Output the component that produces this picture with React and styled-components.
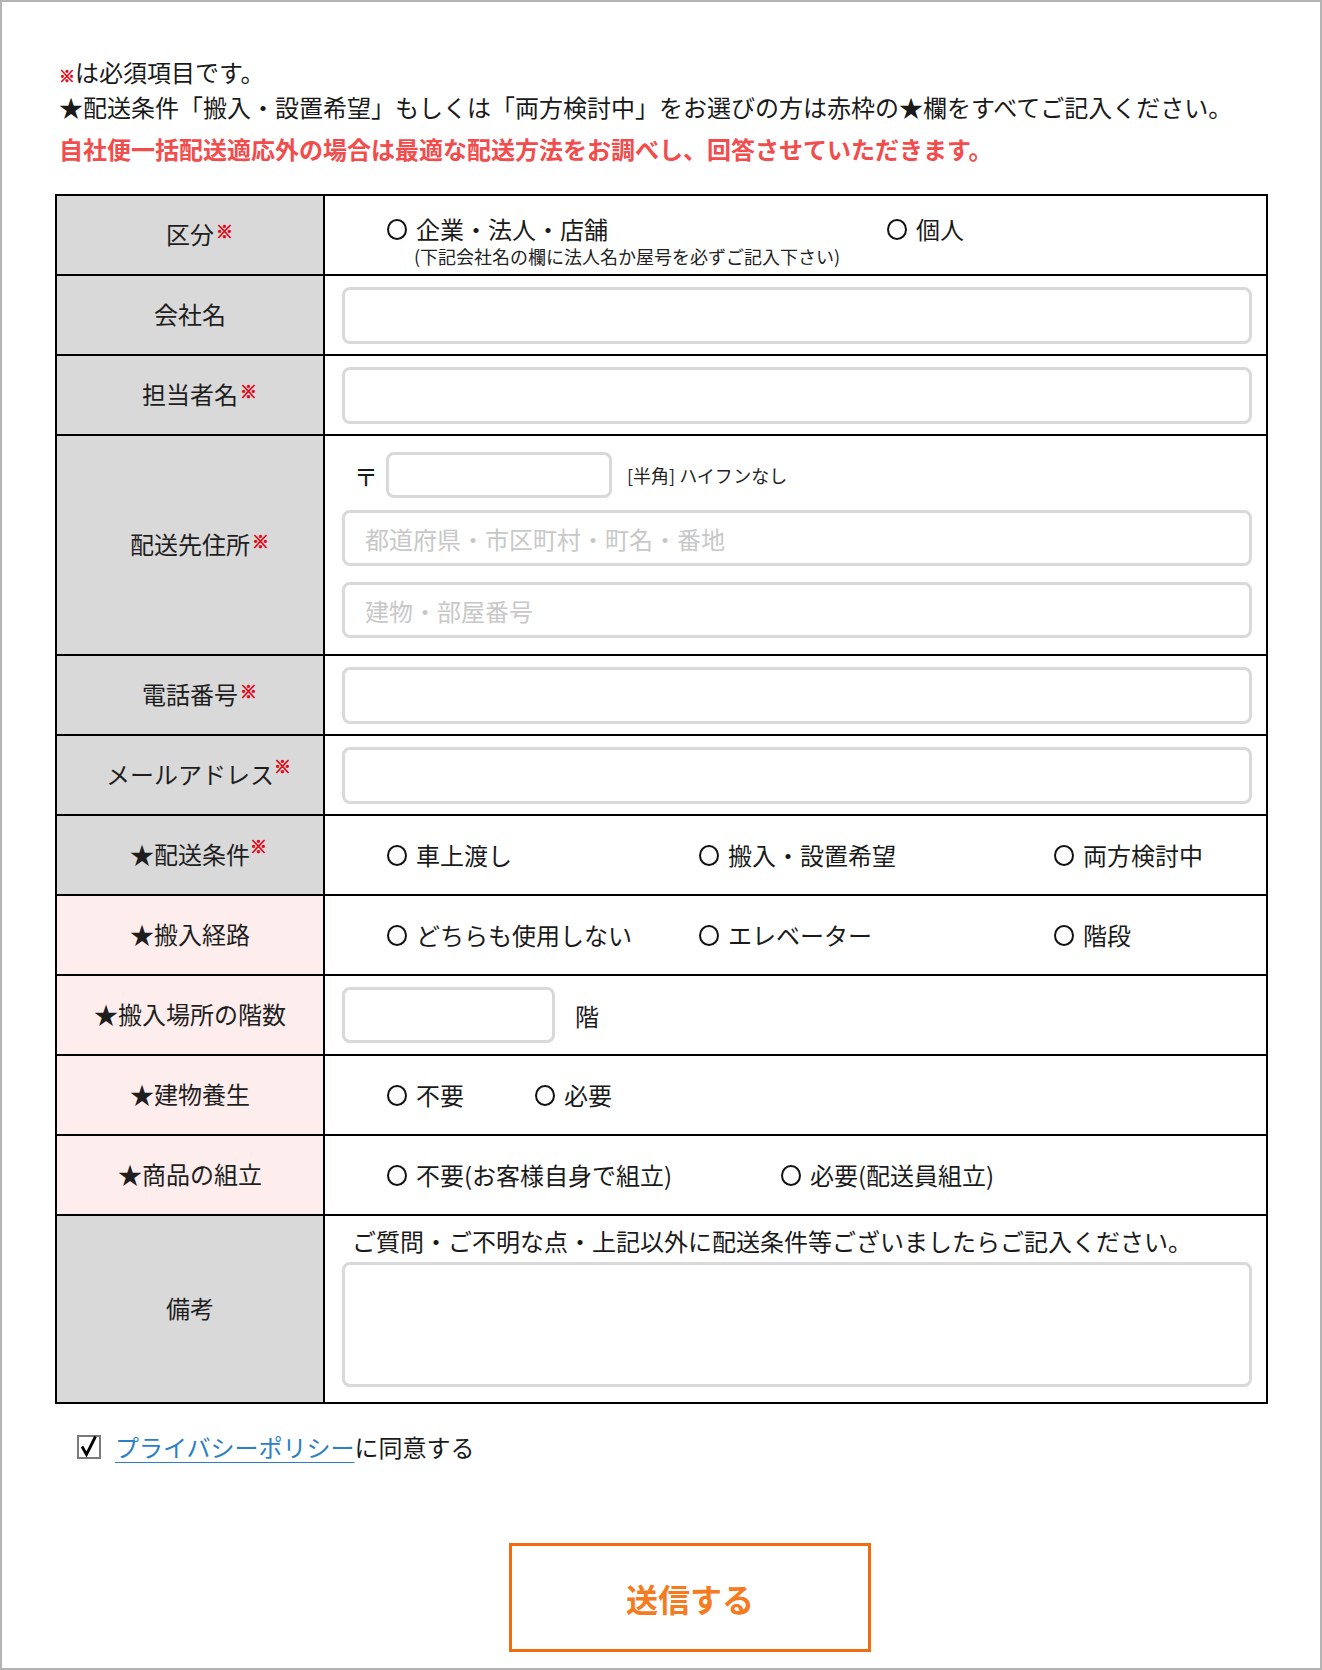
import React from 'react';
import styled, { createGlobalStyle } from 'styled-components';

const GlobalStyle = createGlobalStyle`
  html, body { margin: 0; padding: 0; background: #fff; }
  body {
    font-family: "Noto Sans CJK JP", "Noto Sans", sans-serif;
    color: #1a1a1a;
  }
  *, *::before, *::after { box-sizing: border-box; }
`;

const Frame = styled.div`
  width: 1322px;
  height: 1670px;
  border: 2px solid #b4b4b4;
  padding: 52px 52px 0 53px;
`;

/* ---------- notes above the form ---------- */
const Notes = styled.div`
  padding-left: 4px;
  font-size: 24px;
  line-height: 35px;
`;

const NoteLine = styled.p`
  margin: 0;
  height: 35px;
`;

const AlertLine = styled.p`
  margin: 7px 0 0;
  color: #f24c4c;
  font-weight: 700;
`;

const SmallMark = styled.span`
  color: #e60012;
  font-size: 16px;
  font-weight: 700;
  line-height: 1;
  -webkit-text-stroke: 0.6px #e60012;
`;

/* ---------- form table ---------- */
const Table = styled.div`
  margin-top: 28px;
  border: 2px solid #000;
`;

const Row = styled.div`
  display: grid;
  grid-template-columns: 266px 1fr;
  min-height: ${(p) => p.$h || 80}px;
  border-bottom: 2px solid #000;
  &:last-child {
    border-bottom: none;
  }
`;

const Label = styled.div`
  background: ${(p) => (p.$pink ? '#fdeded' : '#d9d9d9')};
  display: flex;
  align-items: center;
  justify-content: center;
  font-size: 24px;
  line-height: 30px;
  color: #1e1e1e;
`;

const LabelText = styled.span`
  position: relative;
  top: -1px;
`;

const Required = styled.span`
  position: absolute;
  left: 100%;
  top: ${(p) => (p.$high ? '-2px' : '3px')};
  margin-left: ${(p) => (p.$high ? '0px' : '2px')};
  color: #e60012;
  font-size: 17px;
  font-weight: 700;
  line-height: 1;
  -webkit-text-stroke: 0.7px #e60012;
`;

const Cell = styled.div`
  border-left: 2px solid #000;
  display: flex;
  flex-direction: column;
  justify-content: ${(p) => (p.$top ? 'flex-start' : 'center')};
  padding: ${(p) => p.$pad || '0 14px 0 17px'};
`;

const TextInput = styled.input`
  display: block;
  width: ${(p) => (p.$w ? `${p.$w}px` : '100%')};
  height: ${(p) => p.$h || 57}px;
  margin-top: ${(p) => p.$mt || 0}px;
  border: 3px solid #d9d9d9;
  border-radius: 8px;
  background: #fff;
  padding: 0 20px;
  font-family: inherit;
  font-size: 24px;
  color: #1a1a1a;
  outline: none;
  &::placeholder {
    color: #c8c8c8;
  }
`;

const TextArea = styled.textarea`
  display: block;
  width: 100%;
  height: 125px;
  margin-top: 6px;
  border: 3px solid #d9d9d9;
  border-radius: 8px;
  background: #fff;
  padding: 12px 20px;
  font-family: inherit;
  font-size: 24px;
  resize: none;
  outline: none;
`;

const InlineRow = styled.div`
  display: flex;
  align-items: center;
  font-size: 24px;
`;

const PostalMark = styled.span`
  width: 24px;
  margin: 0 8px 0 12px;
  font-size: 24px;
  text-align: center;
`;

const Hint = styled.span`
  margin-left: 15px;
  font-size: 18px;
  color: #222;
`;

const Unit = styled.span`
  margin-left: 20px;
  font-size: 24px;
`;

const Guide = styled.p`
  margin: 0 0 0 10px;
  font-size: 24px;
  line-height: 30px;
`;

/* ---------- radio options ---------- */
const OptionGrid = styled.div`
  display: grid;
  grid-template-columns: ${(p) => p.$cols};
  align-items: start;
`;

const Option = styled.label`
  display: flex;
  flex-direction: column;
  font-size: 24px;
  line-height: 30px;
  white-space: nowrap;
`;

const OptionMain = styled.span`
  display: inline-flex;
  align-items: center;
`;

const Circle = styled.span`
  flex: none;
  width: 29px;
  height: 30px;
  display: inline-flex;
  align-items: center;
  &::before {
    content: '';
    width: 20px;
    height: 21px;
    border: 2px solid #111;
    border-radius: 50%;
  }
`;

const OptionNote = styled.span`
  margin: 1px 0 0 27px;
  font-size: 18px;
  line-height: 22px;
  color: #222;
`;

/* ---------- agreement + submit ---------- */
const Agree = styled.div`
  margin-top: 28px;
  padding-left: 22px;
  display: flex;
  align-items: center;
  font-size: 24px;
  line-height: 30px;
`;

const CheckIcon = styled.svg`
  flex: none;
  margin-right: 14px;
`;

const PolicyLink = styled.a`
  color: #2b7fc3;
  text-decoration: underline;
  text-underline-offset: 5px;
  text-decoration-thickness: 1px;
`;

const Submit = styled.button`
  display: block;
  margin: 81px 0 0 454px;
  width: 362px;
  height: 109px;
  border: 3px solid #f26b0f;
  background: #fff;
  color: #f57b20;
  font-family: inherit;
  font-size: 32px;
  font-weight: 700;
  cursor: pointer;
`;

const Radio = ({ children, note }) => (
  <Option>
    <OptionMain>
      <Circle />
      {children}
    </OptionMain>
    {note && <OptionNote>{note}</OptionNote>}
  </Option>
);

const FieldLabel = ({ children, req, high, pink }) => (
  <Label $pink={pink}>
    <LabelText>
      {children}
      {req && <Required $high={high}>※</Required>}
    </LabelText>
  </Label>
);

const RadioRow = ({ label, req, high, pink, cols, options }) => (
  <Row>
    <FieldLabel req={req} high={high} pink={pink}>
      {label}
    </FieldLabel>
    <Cell $pad="0 0 0 62px">
      <OptionGrid $cols={cols}>
        {options.map((o) => (
          <Radio key={o}>{o}</Radio>
        ))}
      </OptionGrid>
    </Cell>
  </Row>
);

export default function App() {
  return (
    <>
      <GlobalStyle />
      <Frame>
        <Notes>
          <NoteLine>
            <SmallMark>※</SmallMark>は必須項目です。
          </NoteLine>
          <NoteLine>
            ★配送条件「搬入・設置希望」もしくは「両方検討中」をお選びの方は赤枠の★欄をすべてご記入ください。
          </NoteLine>
          <AlertLine>
            自社便一括配送適応外の場合は最適な配送方法をお調べし、回答させていただきます。
          </AlertLine>
        </Notes>

        <Table>
          <Row>
            <FieldLabel req>区分</FieldLabel>
            <Cell $top $pad="18px 0 0 62px">
              <OptionGrid $cols="500px auto">
                <Radio note="(下記会社名の欄に法人名か屋号を必ずご記入下さい)">
                  企業・法人・店舗
                </Radio>
                <Radio>個人</Radio>
              </OptionGrid>
            </Cell>
          </Row>

          <Row>
            <FieldLabel>会社名</FieldLabel>
            <Cell>
              <TextInput type="text" />
            </Cell>
          </Row>

          <Row>
            <FieldLabel req>担当者名</FieldLabel>
            <Cell>
              <TextInput type="text" />
            </Cell>
          </Row>

          <Row $h={220}>
            <FieldLabel req>配送先住所</FieldLabel>
            <Cell $top $pad="16px 14px 0 17px">
              <InlineRow>
                <PostalMark>〒</PostalMark>
                <TextInput type="text" $w={226} $h={46} />
                <Hint>[半角] ハイフンなし</Hint>
              </InlineRow>
              <TextInput type="text" $h={56} $mt={12} placeholder="都道府県・市区町村・町名・番地" />
              <TextInput type="text" $h={56} $mt={16} placeholder="建物・部屋番号" />
            </Cell>
          </Row>

          <Row>
            <FieldLabel req>電話番号</FieldLabel>
            <Cell>
              <TextInput type="tel" />
            </Cell>
          </Row>

          <Row>
            <FieldLabel req high>
              メールアドレス
            </FieldLabel>
            <Cell>
              <TextInput type="email" />
            </Cell>
          </Row>

          <RadioRow
            label="★配送条件"
            req
            high
            cols="312px 355px auto"
            options={['車上渡し', '搬入・設置希望', '両方検討中']}
          />

          <RadioRow
            label="★搬入経路"
            pink
            cols="312px 355px auto"
            options={['どちらも使用しない', 'エレベーター', '階段']}
          />

          <Row>
            <FieldLabel pink>★搬入場所の階数</FieldLabel>
            <Cell>
              <InlineRow>
                <TextInput type="text" $w={213} $h={56} />
                <Unit>階</Unit>
              </InlineRow>
            </Cell>
          </Row>

          <RadioRow label="★建物養生" pink cols="148px auto" options={['不要', '必要']} />

          <RadioRow
            label="★商品の組立"
            pink
            cols="394px auto"
            options={['不要(お客様自身で組立)', '必要(配送員組立)']}
          />

          <Row $h={186}>
            <FieldLabel>備考</FieldLabel>
            <Cell $top $pad="10px 14px 0 17px">
              <Guide>ご質問・ご不明な点・上記以外に配送条件等ございましたらご記入ください。</Guide>
              <TextArea />
            </Cell>
          </Row>
        </Table>

        <Agree>
          <CheckIcon width="24" height="24" viewBox="0 0 24 24">
            <rect x="1" y="1" width="22" height="22" fill="#fff" stroke="#7a7a7a" strokeWidth="2" />
            <path d="M5 11.5 L9.5 19.5 L18.5 1.5" fill="none" stroke="#000" strokeWidth="2.8" strokeLinejoin="miter" />
          </CheckIcon>
          <PolicyLink href="#">プライバシーポリシー</PolicyLink>
          <span>に同意する</span>
        </Agree>

        <Submit type="button">送信する</Submit>
      </Frame>
    </>
  );
}
